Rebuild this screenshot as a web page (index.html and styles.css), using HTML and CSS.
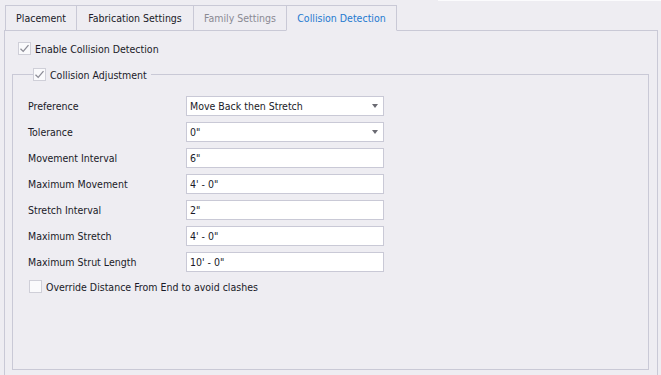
FILE: index.html
```html
<!DOCTYPE html>
<html>
<head>
<meta charset="utf-8">
<link rel="stylesheet" href="styles.css">
</head>
<body>
<div class="topline"><div class="topline-fill"></div></div>
<div class="tabstrip">
  <div class="tab-lead"></div>
  <div class="tab tab-w1">Placement</div>
  <div class="tab tab-w2">Fabrication Settings</div>
  <div class="tab tab-w3 tab-disabled">Family Settings</div>
  <div class="tab tab-w4 tab-active">Collision Detection</div>
  <div class="tab-fill"></div>
</div>
<div class="panel">
  <label class="check-row enable-row">
    <span class="checkbox checked"><svg viewBox="0 0 13 13" width="13" height="13"><path d="M2.5 6.8 L5.2 9.4 L10.5 3.2" fill="none" stroke="#8c8c96" stroke-width="1.3"/></svg></span>
    <span class="check-text">Enable Collision Detection</span>
  </label>
  <fieldset class="group">
    <legend class="group-legend">
      <span class="checkbox checked"><svg viewBox="0 0 13 13" width="13" height="13"><path d="M2.5 6.8 L5.2 9.4 L10.5 3.2" fill="none" stroke="#8c8c96" stroke-width="1.3"/></svg></span>
      <span class="check-text">Collision Adjustment</span>
    </legend>
    <div class="form-grid">
      <div class="label">Preference</div>
      <div class="input combo"><span>Move Back then Stretch</span><span class="arrow"></span></div>
      <div class="label">Tolerance</div>
      <div class="input combo"><span>0"</span><span class="arrow"></span></div>
      <div class="label">Movement Interval</div>
      <div class="input"><span>6"</span></div>
      <div class="label">Maximum Movement</div>
      <div class="input"><span>4' - 0"</span></div>
      <div class="label">Stretch Interval</div>
      <div class="input"><span>2"</span></div>
      <div class="label">Maximum Stretch</div>
      <div class="input"><span>4' - 0"</span></div>
      <div class="label">Maximum Strut Length</div>
      <div class="input"><span>10' - 0"</span></div>
    </div>
    <label class="check-row override-row">
      <span class="checkbox"></span>
      <span class="check-text">Override Distance From End to avoid clashes</span>
    </label>
  </fieldset>
</div>
</body>
</html>
```
FILE: styles.css
```css
* { box-sizing: border-box; }
html, body {
  margin: 0;
  padding: 0;
  background: #eeedf2;
  width: 661px;
  height: 375px;
  overflow: hidden;
  font-family: "DejaVu Sans Condensed", "DejaVu Sans", sans-serif;
  font-size: 10.5px;
  color: #1a1a28;
}
.topline {
  display: flex;
  height: 1px;
}
.topline-fill {
  margin-left: 438px;
  flex: 1;
  background: #fbfbfd;
}
.tabstrip {
  display: flex;
  margin: 4px 3px 0 4px;
  height: 26px;
}
.tab-lead {
  width: 1px;
  border-bottom: 1px solid #c9c9d6;
}
.tab {
  height: 26px;
  border: 1px solid #c9c9d6;
  display: flex;
  align-items: center;
  justify-content: center;
  margin-right: -1px;
  padding-bottom: 1px;
  color: #1a1a28;
}
.tab-w1 { width: 72px; }
.tab-w2 { width: 118px; }
.tab-w3 { width: 94px; }
.tab-w4 { width: 111px; }
.tab-disabled { color: #8a8a92; }
.tab-active {
  color: #1f7ad0;
  border-bottom-color: #eeedf2;
}
.tab-fill {
  flex: 1;
  margin-left: 1px;
  border-bottom: 1px solid #c9c9d6;
}
.panel {
  margin: 0 3px 0 4px;
  height: 344px;
  border: 1px solid #c9c9d6;
  border-top: none;
  border-bottom: none;
  padding: 11px 8px 0 7px;
}
.check-row {
  display: flex;
  align-items: center;
  gap: 4px;
}
.enable-row {
  margin-left: 6px;
  height: 13px;
}
.checkbox {
  width: 13px;
  height: 13px;
  border: 1px solid #cfcfd8;
  background: #fafafc;
  display: block;
  flex: none;
  position: relative;
}
.checkbox svg {
  display: block;
  margin: -1px;
}
.group {
  margin: 13px 0 0 0;
  padding: 0 0 0 15px;
  border: 1px solid #c9c9d6;
  height: 302px;
}
.group-legend {
  display: flex;
  align-items: center;
  gap: 4px;
  margin-left: 5px;
  padding: 0 4px 0 0;
}
.form-grid {
  display: grid;
  grid-template-columns: 158px 198px;
  row-gap: 6px;
  margin-top: 15px;
}
.label {
  height: 20px;
  display: flex;
  align-items: center;
}
.input {
  height: 20px;
  border: 1px solid #c9c9d6;
  background: #ffffff;
  display: flex;
  align-items: center;
  padding-left: 3px;
  justify-content: space-between;
}
.arrow {
  width: 0;
  height: 0;
  border-left: 3.5px solid transparent;
  border-right: 3.5px solid transparent;
  border-top: 4px solid #6a6a72;
  margin-right: 5px;
}
.override-row {
  margin-top: 8px;
  margin-left: 1px;
  height: 13px;
}
```
